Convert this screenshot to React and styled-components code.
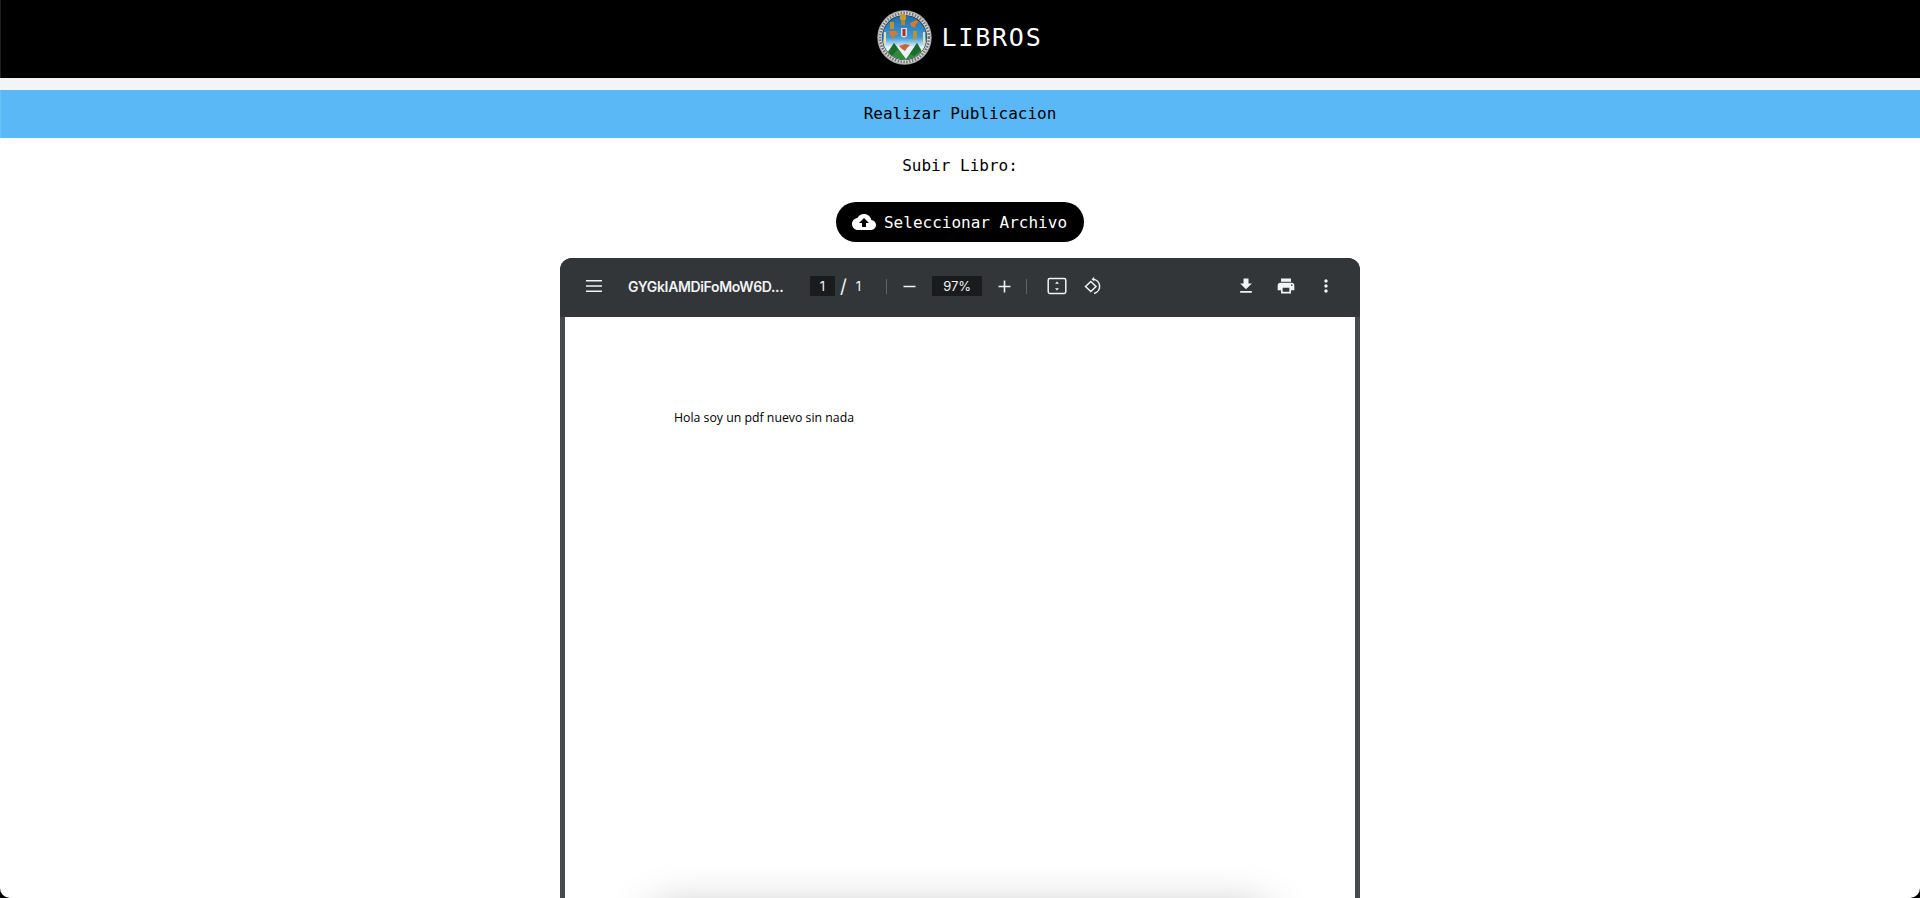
import React from 'react';
import styled, { createGlobalStyle } from 'styled-components';

const GlobalStyle = createGlobalStyle`
  html, body {
    margin: 0;
    height: 100%;
    overflow: hidden;
    background-color: #fff;
  }
  body {
    font-family: "DejaVu Sans Mono", "Liberation Mono", monospace;
  }
`;

const Page = styled.div`
  display: flex;
  flex-direction: column;
  align-items: center;
  height: 898px;
  overflow: hidden;
  background-color: #fff;
`;

const WindowCorners = styled.div`
  position: fixed;
  inset: 0;
  border-radius: 0 0 10px 10px;
  border-left: 1px solid rgba(255, 255, 255, 0.12);
  box-shadow: 0 0 0 12px #000;
  pointer-events: none;
`;

const Header = styled.header`
  display: flex;
  align-items: center;
  justify-content: center;
  gap: 9px;
  flex: none;
  box-sizing: border-box;
  width: 100%;
  height: 78px;
  padding-bottom: 3px;
  color: #fff;
  background-color: #000;
`;

const Title = styled.h1`
  margin: 0;
  font-size: 25px;
  font-weight: 400;
  letter-spacing: 1.8px;
`;

const Divider = styled.div`
  flex: none;
  width: 100%;
  height: 12px;
  background-color: #f3f4f6;
`;

const Banner = styled.div`
  display: flex;
  align-items: center;
  justify-content: center;
  flex: none;
  box-sizing: border-box;
  width: 100%;
  height: 48px;
  padding-bottom: 1px;
  font-size: 16px;
  color: #000;
  background-color: #5ab8f7;
`;

const UploadLabel = styled.p`
  flex: none;
  margin: 18px 0 27px;
  font-size: 16px;
  line-height: 19px;
  color: #000;
`;

const UploadButton = styled.button`
  display: flex;
  align-items: center;
  gap: 8px;
  flex: none;
  height: 40px;
  padding: 0 17px 0 16px;
  font-family: inherit;
  font-size: 16px;
  color: #fff;
  background-color: #000;
  border: none;
  border-radius: 20px;
  cursor: pointer;
`;

const Viewer = styled.section`
  display: flex;
  flex-direction: column;
  flex: none;
  width: 800px;
  height: 900px;
  margin-top: 16px;
  overflow: hidden;
  background-color: #47494c;
  border-radius: 12px 12px 0 0;
`;

const Toolbar = styled.div`
  display: flex;
  align-items: center;
  flex: none;
  box-sizing: border-box;
  height: 59px;
  padding: 0 24px 3px 25px;
  color: #f1f3f4;
  font-family: Inter, "Noto Sans", sans-serif;
  background-color: #323639;
`;

const FileName = styled.span`
  width: 182px;
  margin-left: 25px;
  font-size: 14px;
  font-weight: 600;
  letter-spacing: -0.35px;
  white-space: nowrap;
`;

const NumberBox = styled.span`
  display: flex;
  align-items: center;
  justify-content: center;
  flex: none;
  width: ${({ $width }) => $width}px;
  height: 20px;
  margin-left: ${({ $left }) => $left || 0}px;
  font-size: 13px;
  color: #f1f3f4;
  background-color: #191b1c;
`;

const PageText = styled.span`
  margin-left: ${({ $left }) => $left}px;
  font-size: ${({ $size }) => $size}px;
  font-weight: 400;
`;

const Separator = styled.span`
  flex: none;
  width: 1px;
  height: 15px;
  margin: 0 ${({ $right }) => $right}px 0 ${({ $left }) => $left}px;
  background-color: #5f6368;
`;

const ToolIcon = styled.svg`
  display: block;
  flex: none;
  margin-left: ${({ $left }) => $left || 0}px;
  fill: ${({ $outline }) => ($outline ? 'none' : 'currentColor')};
  stroke: ${({ $outline }) => ($outline ? 'currentColor' : 'none')};
`;

const Spacer = styled.div`
  flex: 1;
`;

const DocumentArea = styled.div`
  flex: 1;
  margin: 0 5px;
  overflow: hidden;
  background-color: #fff;
`;

const Sheet = styled.div`
  height: 596px;
  padding: 92px 0 0 109px;
  box-sizing: border-box;
  font-family: "Open Sans", "Noto Sans", sans-serif;
  font-size: 12.3px;
  line-height: 18px;
  color: #000;
  background-color: #fff;
`;

const NextSheet = styled.div`
  height: 200px;
  margin: 0 90px;
  background-color: #fff;
  box-shadow: 0 0 44px rgba(0, 0, 0, 0.32);
`;

const Seal = () => (
  <svg width="55" height="55" viewBox="0 0 55 55" aria-hidden="true">
    <defs>
      <linearGradient id="sky" x1="0" y1="0" x2="0" y2="1">
        <stop offset="0" stopColor="#1c6cab" />
        <stop offset="0.5" stopColor="#3f9ad6" />
        <stop offset="0.72" stopColor="#e8f3f8" />
      </linearGradient>
      <clipPath id="disc">
        <circle cx="27.5" cy="27.5" r="22" />
      </clipPath>
    </defs>
    <circle cx="27.5" cy="27.5" r="27.2" fill="#a9aaaa" />
    <circle cx="27.5" cy="27.5" r="26" fill="#dcdcda" />
    <circle cx="27.5" cy="27.5" r="24.4" fill="none" stroke="#6f7172" strokeWidth="2.6" strokeDasharray="1.6 1.3" />
    <circle cx="27.5" cy="27.5" r="22.6" fill="#20303c" />
    <g clipPath="url(#disc)">
      <rect x="5" y="5" width="45" height="45" fill="url(#sky)" />
      <path d="M5 50 L17 33 L29 49 L40 33 L50 50 Z" fill="#2f8a3c" />
      <path d="M17 33 L21 39 L15 46 L10 46 Z M40 33 L44 40 L37 46 L33 44 Z" fill="#1e6a2c" />
    </g>
    <rect x="23" y="4" width="6" height="6" rx="1.5" fill="#c99a2e" />
    <path d="M24 10 h4 v5 h-4 z" fill="#b9832a" />
    <path d="M24 18 h6 v8 q-3 3 -6 0 z" fill="#dcdcdc" />
    <path d="M25.5 19 h3 v7 h-3 z" fill="#a8322c" />
    <path d="M33 13 l6 -3 l3 2 l-3 2 l-1 4 l-4 -2 z" fill="#d9782a" />
    <path d="M12 21 l7 0 l2 3 l-3 1 l-2 4 l-3 -4 z" fill="#d9782a" />
    <path d="M13 12 h4 v7 h-4 z" fill="#c2912e" />
    <path d="M36 21 h4 v8 h-4 z" fill="#c2912e" />
    <path d="M7 22 h2 v12 h-2 z M46 22 h2 v12 h-2 z" fill="#e8dfa0" />
    <path d="M22 36 l6 -2 l5 1 l-3 3 l-2 3 l-3 -2 z" fill="#c9653a" />
  </svg>
);

const CloudIcon = () => (
  <svg width="24" height="24" viewBox="0 0 24 24" fill="#fff" aria-hidden="true">
    <path d="M19.35 10.04C18.67 6.59 15.64 4 12 4 9.11 4 6.6 5.64 5.35 8.04 2.34 8.36 0 10.91 0 14c0 3.31 2.69 6 6 6h13c2.76 0 5-2.24 5-5 0-2.64-2.05-4.78-4.65-4.96zM14 13v4h-4v-4H7l5-5 5 5h-3z" />
  </svg>
);

const App = () => (
  <Page>
    <GlobalStyle />
    <Header>
      <Seal />
      <Title>LIBROS</Title>
    </Header>
    <Divider />
    <Banner>Realizar Publicacion</Banner>
    <UploadLabel>Subir Libro:</UploadLabel>
    <UploadButton>
      <CloudIcon />
      Seleccionar Archivo
    </UploadButton>
    <Viewer>
      <Toolbar>
        <ToolIcon width="18" height="14" viewBox="0 0 18 14">
          <path d="M1 1h16v1.6H1zM1 6.2h16v1.6H1zM1 11.4h16V13H1z" />
        </ToolIcon>
        <FileName>GYGkIAMDiFoMoW6D...</FileName>
        <NumberBox $width={25}>1</NumberBox>
        <PageText $left={5} $size={19}>/</PageText>
        <PageText $left={9} $size={13}>1</PageText>
        <Separator $left={25} $right={16} />
        <ToolIcon width="13" height="13" viewBox="0 0 13 13">
          <path d="M0.5 5.7h12v1.6H0.5z" />
        </ToolIcon>
        <NumberBox $width={50} $left={16}>97%</NumberBox>
        <ToolIcon $left={16} width="13" height="13" viewBox="0 0 13 13">
          <path d="M0.5 5.7h5.2V0.5h1.6v5.2h5.2v1.6H7.3v5.2H5.7V7.3H0.5z" />
        </ToolIcon>
        <Separator $left={15} $right={20} />
        <ToolIcon $outline width="20" height="18" viewBox="0 0 20 18" strokeWidth="1.5">
          <rect x="1.2" y="1.6" width="17.6" height="14.8" rx="1.6" />
          <path d="M10 4.4 L8 6.8h4zM10 13.6 L8 11.2h4z" fill="currentColor" stroke="none" />
        </ToolIcon>
        <ToolIcon $outline $left={17} width="18" height="20" viewBox="0 0 18 20" strokeWidth="1.5">
          <path d="M1.5 10.5 L6.8 5.5 L12 10.5 L6.8 15.5 Z" />
          <path d="M9 3.2 A7.2 7.2 0 0 1 10 17.4" />
          <path d="M10.2 0.8 L7.6 3.2 L10.2 5.4" fill="currentColor" stroke="none" />
        </ToolIcon>
        <Spacer />
        <ToolIcon width="20" height="20" viewBox="0 0 24 24">
          <path d="M19 9h-4V3H9v6H5l7 7 7-7zM5 18v2h14v-2H5z" />
        </ToolIcon>
        <ToolIcon $left={20} width="20" height="20" viewBox="0 0 24 24">
          <path d="M19 8H5c-1.66 0-3 1.34-3 3v6h4v4h12v-4h4v-6c0-1.66-1.34-3-3-3zm-3 11H8v-5h8v5zm3-7c-.55 0-1-.45-1-1s.45-1 1-1 1 .45 1 1-.45 1-1 1zm-1-9H6v4h12V3z" />
        </ToolIcon>
        <ToolIcon $left={20} width="20" height="20" viewBox="0 0 24 24">
          <path d="M12 8c1.1 0 2-.9 2-2s-.9-2-2-2-2 .9-2 2 .9 2 2 2zm0 2c-1.1 0-2 .9-2 2s.9 2 2 2 2-.9 2-2-.9-2-2-2zm0 6c-1.1 0-2 .9-2 2s.9 2 2 2 2-.9 2-2-.9-2-2-2z" />
        </ToolIcon>
      </Toolbar>
      <DocumentArea>
        <Sheet>Hola soy un pdf nuevo sin nada</Sheet>
        <NextSheet />
      </DocumentArea>
    </Viewer>
    <WindowCorners />
  </Page>
);

export default App;
